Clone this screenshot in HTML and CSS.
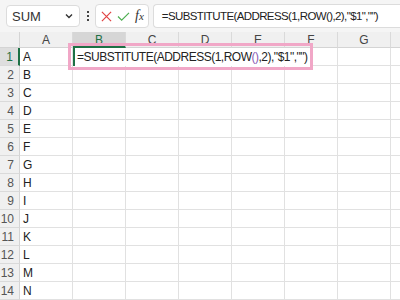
FILE: index.html
```html
<!DOCTYPE html>
<html>
<head>
  <title>Sheet</title>
  <link rel="stylesheet" href="styles.css">
</head>
<body>
  <div class="toolbar">
    <div class="namebox">
      <span>SUM</span>
      <svg class="chev" width="8" height="6" viewBox="0 0 8 6"><path d="M1 1.5 L4 4.5 L7 1.5" fill="none" stroke="#333" stroke-width="1.4"/></svg>
    </div>
    <div class="dots"><i></i><i></i><i></i></div>
    <div class="fnbox">
      <svg width="11" height="11" viewBox="0 0 12 12"><path d="M1 1 L11 11 M11 1 L1 11" stroke="#e04343" stroke-width="1.3" fill="none"/></svg>
      <svg width="13" height="11" viewBox="0 0 14 12"><path d="M1 6 L5 10 L13 2" stroke="#4caf50" stroke-width="1.3" fill="none"/></svg>
      <span class="fx"><i>f</i><i class="x">x</i></span>
    </div>
    <div class="formula">=SUBSTITUTE(ADDRESS(1,ROW(),2),"$1","")</div>
  </div>

  <div class="sheet">
    <div class="grid" id="grid"></div>
    <div class="edit">=SUBSTITUTE(ADDRESS(1,ROW<span class="p1">(</span><span class="p1">)</span>,2),"$1",""<span>)</span><span class="caret"></span></div>
    <div class="mark"></div>
  </div>

  <script>
    const grid = document.getElementById('grid');
    const cols = ['A', 'B', 'C', 'D', 'E', 'F', 'G', ''];
    let html = '<div class="corner"><span></span></div>';
    cols.forEach(c => {
      html += '<div class="colhead' + (c === 'B' ? ' active' : '') + '">' + c + '</div>';
    });
    for (let r = 1; r <= 14; r++) {
      html += '<div class="rowhead' + (r === 1 ? ' active' : '') + '">' + r + '</div>';
      cols.forEach((c, i) => {
        const val = i === 0 ? String.fromCharCode(64 + r) : '';
        html += '<div class="cell">' + val + '</div>';
      });
    }
    grid.innerHTML = html;
  </script>
</body>
</html>
```

FILE: styles.css
```css
body {
  margin: 0;
  width: 400px;
  height: 300px;
  overflow: hidden;
  background: #fff;
  font-family: "Liberation Sans", Arial, sans-serif;
  color: #222;
}

.toolbar {
  display: flex;
  align-items: center;
  height: 32px;
  padding: 0 0 0 6px;
  background: #f5f5f5;
  box-sizing: border-box;
}

.namebox {
  display: flex;
  align-items: center;
  justify-content: space-between;
  width: 74px;
  height: 22px;
  padding: 0 6px 0 5px;
  box-sizing: border-box;
  background: #fff;
  border: 1px solid #dcdcdc;
  border-radius: 4px;
  font-size: 13px;
  color: #333;
}

.dots {
  display: flex;
  flex-direction: column;
  gap: 2px;
  margin: 0 6px 0 7px;
}
.dots i {
  width: 2px;
  height: 2px;
  background: #444;
}

.fnbox {
  display: flex;
  align-items: center;
  gap: 5px;
  height: 22px;
  padding: 0 4px 0 5px;
  background: #fff;
  border: 1px solid #dcdcdc;
  border-radius: 4px;
}
.fx {
  font-family: "Liberation Serif", serif;
  font-size: 14px;
  color: #333;
}
.fx .x {
  font-size: 11px;
}

.formula {
  flex: 1;
  height: 22px;
  margin-left: 4px;
  padding-left: 8px;
  line-height: 22px;
  background: #fff;
  border: 1px solid #dcdcdc;
  border-right: none;
  border-radius: 4px 0 0 4px;
  font-size: 11.5px;
  letter-spacing: -0.6px;
  white-space: nowrap;
  overflow: hidden;
}

.sheet {
  position: relative;
}

.grid {
  display: grid;
  grid-template-columns: 20px repeat(7, 53px) 20px;
  grid-template-rows: 16px repeat(14, 18px);
}

.corner {
  background: #f0f0f0;
  border-right: 1px solid #d4d4d4;
  border-bottom: 1px solid #d4d4d4;
}

.colhead {
  background: #f0f0f0;
  border-right: 1px solid #dadada;
  border-bottom: 1px solid #d4d4d4;
  text-align: center;
  font-size: 12px;
  line-height: 16px;
  color: #444;
}
.colhead.active {
  background: #d6d6d6;
  border-bottom: 2px solid #1e7145;
  color: #1e7145;
}

.rowhead {
  background: #f0f0f0;
  border-right: 1px solid #d4d4d4;
  border-bottom: 1px solid #dadada;
  text-align: right;
  padding-right: 5px;
  font-size: 12px;
  line-height: 18px;
  color: #555;
}
.rowhead.active {
  background: #dedede;
  border-right: 2px solid #1e7145;
  color: #1e7145;
}

.cell {
  border-right: 1px solid #e1e1e1;
  border-bottom: 1px solid #e1e1e1;
  padding-left: 3px;
  font-size: 12px;
  line-height: 18px;
  color: #222;
}

.edit {
  position: absolute;
  left: 73px;
  top: 16px;
  width: 236px;
  height: 18px;
  padding-left: 2px;
  background: #fff;
  border-left: 2px solid #1e7145;
  font-size: 12px;
  letter-spacing: -0.5px;
  line-height: 18px;
  white-space: nowrap;
}
.edit .p1 {
  color: #8a5bb5;
}
.edit .caret {
  display: inline-block;
  width: 1px;
  height: 15px;
  margin-left: 2px;
  vertical-align: -3px;
  background: #000;
}

.mark {
  position: absolute;
  left: 68px;
  top: 11px;
  width: 239px;
  height: 21px;
  border: 3px solid #f1a7c7;
}
```
